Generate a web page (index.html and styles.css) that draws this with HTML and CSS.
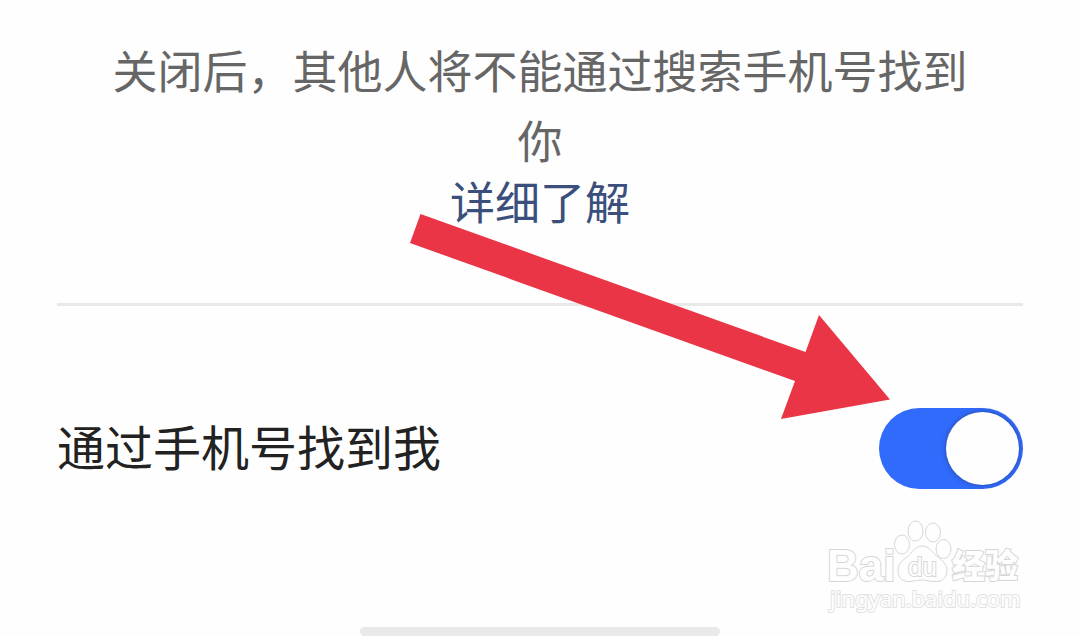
FILE: index.html
```html
<!DOCTYPE html>
<html lang="zh-CN">
<head>
<meta charset="utf-8">
<meta name="viewport" content="width=device-width, initial-scale=1">
<title>通过手机号找到我</title>
<link rel="stylesheet" href="styles.css">
</head>
<body>
<main class="page">
  <header class="intro">
    <p class="intro-text">关闭后，其他人将不能通过搜索手机号找到你</p>
    <a class="intro-link" href="#">详细了解</a>
  </header>
  <section class="setting">
    <label class="setting-label" for="find-by-phone">通过手机号找到我</label>
    <input class="switch" type="checkbox" role="switch" id="find-by-phone" checked>
  </section>
  <div class="home-bar"></div>
  <svg class="arrow" width="480" height="207" viewBox="0 0 480 207" aria-hidden="true">
    <path d="M10.500 1 395.500 139 409 102 480 186.500 371 206 385 168 0 30Z" fill="#ea3546"/>
  </svg>
  <svg class="watermark" width="204" height="100" viewBox="0 0 204 100" role="img" aria-label="Baidu 经验">
    <g class="mark-shape">
      <ellipse cx="80" cy="28.500" rx="7.500" ry="9.500"/>
      <ellipse cx="93.500" cy="15" rx="7.500" ry="10"/>
      <ellipse cx="111" cy="16.500" rx="7.500" ry="9.500"/>
      <ellipse cx="121.500" cy="33" rx="7.500" ry="9.500"/>
      <path d="M100 30C93 30 90 37 85 41C79 45 76 49 76 55C76 62 81 66 88 65.500C93 65 96 64 100 64C105 64 109 66 115 65.500C122 65 125 60 125 54C125 49 121 45 116 41C110 37 108 30 100 30Z"/>
    </g>
    <g class="mark-text">
      <text class="mark-bai" x="5" y="65">Bai</text>
      <text class="mark-du" x="86" y="60">du</text>
      <text class="mark-cn" x="130" y="62">经验</text>
      <text class="mark-url" x="8" y="91">jingyan.baidu.com</text>
    </g>
  </svg>
</main>
</body>
</html>
```
FILE: styles.css
```css
* {
  box-sizing: border-box;
}

body {
  margin: 0;
  background: #fefefe;
  font-family: "Noto Sans CJK SC", sans-serif;
}

.page {
  position: relative;
  display: flex;
  flex-direction: column;
  min-height: 100vh;
  padding: 35px 57px 0;
  overflow: hidden;
}

.intro {
  display: flex;
  flex-direction: column;
  align-items: center;
  padding: 0 54px 76px;
  border-bottom: 3px solid #e9e9e9;
  text-align: center;
  font-size: 45px;
}

.intro-text {
  margin: 0;
  line-height: 70px;
  color: #666;
}

.intro-link {
  line-height: 52px;
  color: #3b4f7d;
  text-decoration: none;
}

.setting {
  display: flex;
  align-items: center;
  justify-content: space-between;
  padding: 102px 0 40px;
}

.setting-label {
  padding-bottom: 8px;
  font-size: 48px;
  line-height: 72px;
  color: #222;
}

.switch {
  appearance: none;
  display: flex;
  justify-content: flex-end;
  flex: none;
  width: 144px;
  height: 81px;
  margin: 0;
  padding: 4px;
  border-radius: 41px;
  background: #316bfb;
}

.switch::before {
  content: "";
  width: 73px;
  height: 73px;
  border-radius: 50%;
  background: #fefefe;
  box-shadow: 0 0 5px rgba(30, 50, 90, 0.6);
}

.switch:not(:checked) {
  justify-content: flex-start;
  background: #ccc;
}

.home-bar {
  align-self: center;
  width: 360px;
  max-width: 100%;
  height: 9px;
  margin-top: auto;
  border-radius: 5px;
  background: #e9e9e9;
}

.arrow {
  position: absolute;
  top: 213px;
  left: 410px;
  pointer-events: none;
}

.watermark {
  position: absolute;
  top: 516px;
  left: 822px;
  pointer-events: none;
}

.mark-shape,
.mark-text {
  fill: #fefefe;
  stroke: #d6d6d6;
  stroke-width: 1px;
}

.mark-text {
  font-family: "Liberation Sans", sans-serif;
  stroke-width: 2px;
  paint-order: stroke;
}

.mark-bai {
  font-size: 44px;
  font-weight: 700;
}

.mark-du {
  font-size: 26px;
}

.mark-cn {
  font-family: "Noto Sans CJK SC", sans-serif;
  font-size: 33px;
  font-weight: 900;
}

.mark-url {
  font-family: "Noto Sans", sans-serif;
  font-size: 22px;
  stroke: #e2e2e2;
}
```
